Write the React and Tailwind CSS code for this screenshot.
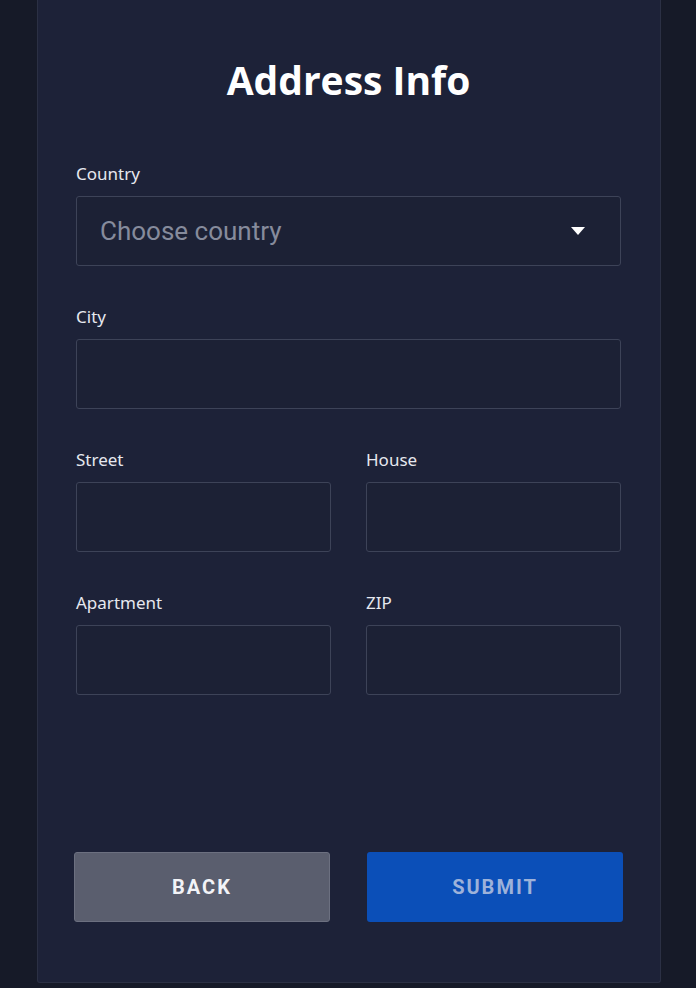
export default function App() {
  const labelCls =
    "block text-[17px] leading-6 text-[#e6e8ef] mb-2.5 font-['Noto_Sans',sans-serif]";
  const boxCls =
    "w-full h-[70px] rounded-[3px] border border-[#3d4358] bg-[#1c2135]";

  return (
    <div className="w-[696px] h-[988px] bg-[#161a28] flex justify-center">
      <div className="w-[624px] h-[983px] ml-[2px] bg-[#1d2238] border border-t-0 border-[#2b3044] rounded-b-[3px] pl-[38px] pr-[39px] pt-[56px] flex flex-col">
        <h1 className="text-center text-[39px] leading-[48px] font-bold text-white font-['Open_Sans',sans-serif]">
          Address Info
        </h1>

        <div className="mt-[58px] flex flex-col gap-[39px]">
          <div>
            <label className={labelCls}>Country</label>
            <div className={`${boxCls} flex items-center justify-between pl-[23px] pr-[35px]`}>
              <span className="text-[26px] text-[#868b9c] font-['Roboto',sans-serif]">
                Choose country
              </span>
              <svg width="14" height="8" viewBox="0 0 14 8">
                <path d="M0 0 L14 0 L7 8 Z" fill="#ffffff" />
              </svg>
            </div>
          </div>

          <div>
            <label className={labelCls}>City</label>
            <div className={boxCls} />
          </div>

          <div className="grid grid-cols-2 gap-x-[35px]">
            <div>
              <label className={labelCls}>Street</label>
              <div className={boxCls} />
            </div>
            <div>
              <label className={labelCls}>House</label>
              <div className={boxCls} />
            </div>
          </div>

          <div className="grid grid-cols-2 gap-x-[35px]">
            <div>
              <label className={labelCls}>Apartment</label>
              <div className={boxCls} />
            </div>
            <div>
              <label className={labelCls}>ZIP</label>
              <div className={boxCls} />
            </div>
          </div>
        </div>

        <div className="mt-[157px] -mx-[2px] grid grid-cols-2 gap-x-[37px]">
          <button className="h-[70px] rounded-[3px] border border-[#6c7080] bg-[#5a5e6e] text-[20px] font-bold tracking-[2px] text-[#f2f3f7] font-['Roboto',sans-serif]">
            BACK
          </button>
          <button className="h-[70px] rounded-[3px] bg-[#0b4fb8] text-[20px] font-bold tracking-[2px] text-[#9db2da] font-['Roboto',sans-serif]">
            SUBMIT
          </button>
        </div>
      </div>
    </div>
  );
}
